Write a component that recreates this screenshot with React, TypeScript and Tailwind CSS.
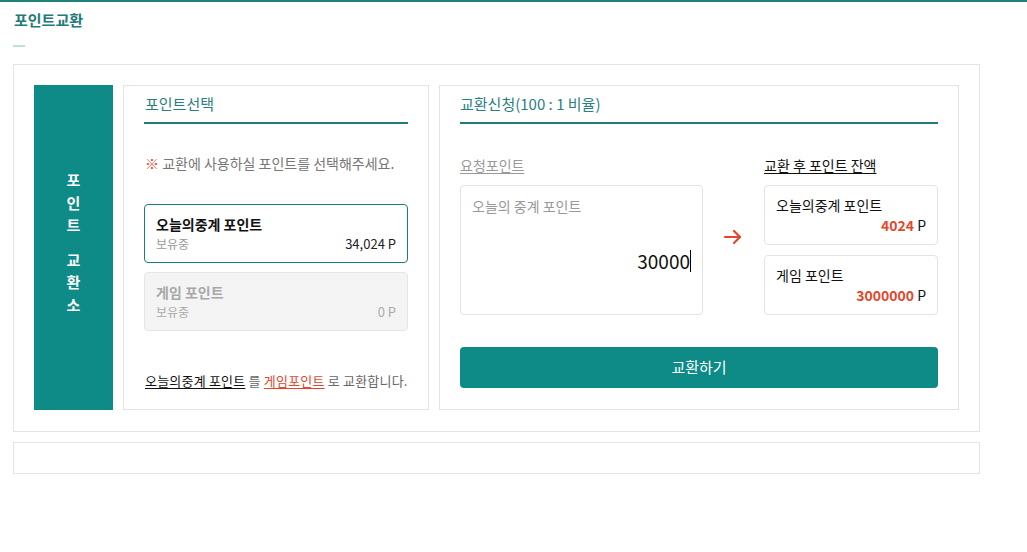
import React from "react";

const font = { fontFamily: '"Noto Sans CJK KR", "Noto Sans", sans-serif' };

export default function App() {
  return (
    <div className="w-[1027px] h-[552px] bg-white relative overflow-hidden" style={font}>
      <div className="h-[2px] bg-[#1f7f7b] w-full" />
      <div className="pl-[14px] pt-[9px] text-[15px] leading-[18px] font-bold text-[#237a78]">포인트교환</div>
      <div className="ml-[13px] mt-[16px] w-[12px] h-[2px] bg-[#bfe0dd]" />
      <div className="ml-[13px] mt-[17px] w-[967px] h-[368px] border border-[#e3e3e3] p-[20px] flex gap-[10px]">
        {/* vertical bar */}
        <div className="w-[79px] shrink-0 h-[325px] bg-[#0e8a87] flex flex-col items-center justify-center gap-[12px] text-white font-bold text-[15px] leading-[22.5px] pb-[10px]">
          <div className="flex flex-col items-center">
            <span>포</span>
            <span>인</span>
            <span>트</span>
          </div>
          <div className="flex flex-col items-center">
            <span>교</span>
            <span>환</span>
            <span>소</span>
          </div>
        </div>
        {/* left panel */}
        <div className="w-[306px] shrink-0 h-[325px] border border-[#e3e3e3] px-[20px] flex flex-col">
          <div className="h-[38px] border-b-2 border-[#237a78] flex items-center pl-[1px] text-[15px] text-[#2a8080]">포인트선택</div>
          <div className="mt-[30px] text-[14px] leading-[18px] text-[#777] pl-[1px] whitespace-nowrap">
            <span className="text-[#e4472c]">※</span> 교환에 사용하실 포인트를 선택해주세요.
          </div>
          <div className="mt-[32px] h-[59px] rounded-[4px] border border-[#1a7d7a] px-[11px] pt-[10px]">
            <div className="text-[14px] leading-[18px] font-bold text-[#111]">오늘의중계 포인트</div>
            <div className="flex justify-between items-center mt-[1px]">
              <span className="text-[12px] text-[#999]">보유중</span>
              <span className="text-[13px] text-[#222]">34,024 P</span>
            </div>
          </div>
          <div className="mt-[9px] h-[59px] rounded-[4px] border border-[#e6e6e6] bg-[#f4f4f4] px-[11px] pt-[10px]">
            <div className="text-[14px] leading-[18px] font-bold text-[#a8a8a8]">게임 포인트</div>
            <div className="flex justify-between items-center mt-[1px]">
              <span className="text-[12px] text-[#aaa]">보유중</span>
              <span className="text-[13px] text-[#aaa]">0 P</span>
            </div>
          </div>
          <div className="mt-[41px] text-[13px] leading-[18px] text-[#666] whitespace-nowrap pl-[1px] tracking-[0.2px]">
            <span className="text-[#111] underline underline-offset-2">오늘의중계 포인트</span> 를{" "}
            <span className="text-[#e4472c] underline underline-offset-2">게임포인트</span> 로 교환합니다.
          </div>
        </div>
        {/* right panel */}
        <div className="w-[520px] shrink-0 h-[325px] border border-[#e3e3e3] px-[20px] flex flex-col">
          <div className="h-[38px] border-b-2 border-[#237a78] flex items-center text-[15px] text-[#2a8080]">교환신청(100 : 1 비율)</div>
          <div className="mt-[32px] flex">
            <div className="w-[243px] flex flex-col">
              <span className="text-[14px] leading-[18px] text-[#999] underline underline-offset-2 self-start">요청포인트</span>
              <div className="mt-[11px] h-[130px] rounded-[4px] border border-[#e3e3e3] px-[11px] pt-[11px] flex flex-col">
                <span className="text-[14px] leading-[18px] text-[#999]">오늘의 중계 포인트</span>
                <div className="mt-[34px] flex justify-end items-center">
                  <span className="text-[19px] leading-[24px] text-[#111]">30000</span>
                  <span className="w-[1px] h-[22px] bg-black" />
                </div>
              </div>
            </div>
            <div className="w-[61px] flex items-center justify-center pt-[3px] pr-[2px]">
              <svg width="20" height="16" viewBox="0 0 20 16" fill="none" stroke="#e4472c" strokeWidth="2.2" strokeLinecap="round" strokeLinejoin="round">
                <path d="M2 8h15" />
                <path d="M11 2l6 6-6 6" />
              </svg>
            </div>
            <div className="w-[174px] flex flex-col">
              <span className="text-[14px] leading-[18px] text-[#111] underline underline-offset-2 self-start">교환 후 포인트 잔액</span>
              <div className="mt-[11px] h-[60px] rounded-[4px] border border-[#e3e3e3] px-[11px] pt-[10px]">
                <div className="text-[14px] leading-[18px] text-[#111]">오늘의중계 포인트</div>
                <div className="text-right text-[14px] leading-[18px] mt-[2px]">
                  <span className="text-[#e4472c] font-bold">4024</span> <span className="text-[#111]">P</span>
                </div>
              </div>
              <div className="mt-[10px] h-[60px] rounded-[4px] border border-[#e3e3e3] px-[11px] pt-[10px]">
                <div className="text-[14px] leading-[18px] text-[#111]">게임 포인트</div>
                <div className="text-right text-[14px] leading-[18px] mt-[2px]">
                  <span className="text-[#e4472c] font-bold">3000000</span> <span className="text-[#111]">P</span>
                </div>
              </div>
            </div>
          </div>
          <button className="mt-[32px] h-[41px] w-[478px] rounded-[4px] bg-[#0e8a87] text-white text-[15px]">교환하기</button>
        </div>
      </div>
      <div className="ml-[13px] mt-[10px] w-[967px] h-[32px] border border-[#e3e3e3]" />
    </div>
  );
}
